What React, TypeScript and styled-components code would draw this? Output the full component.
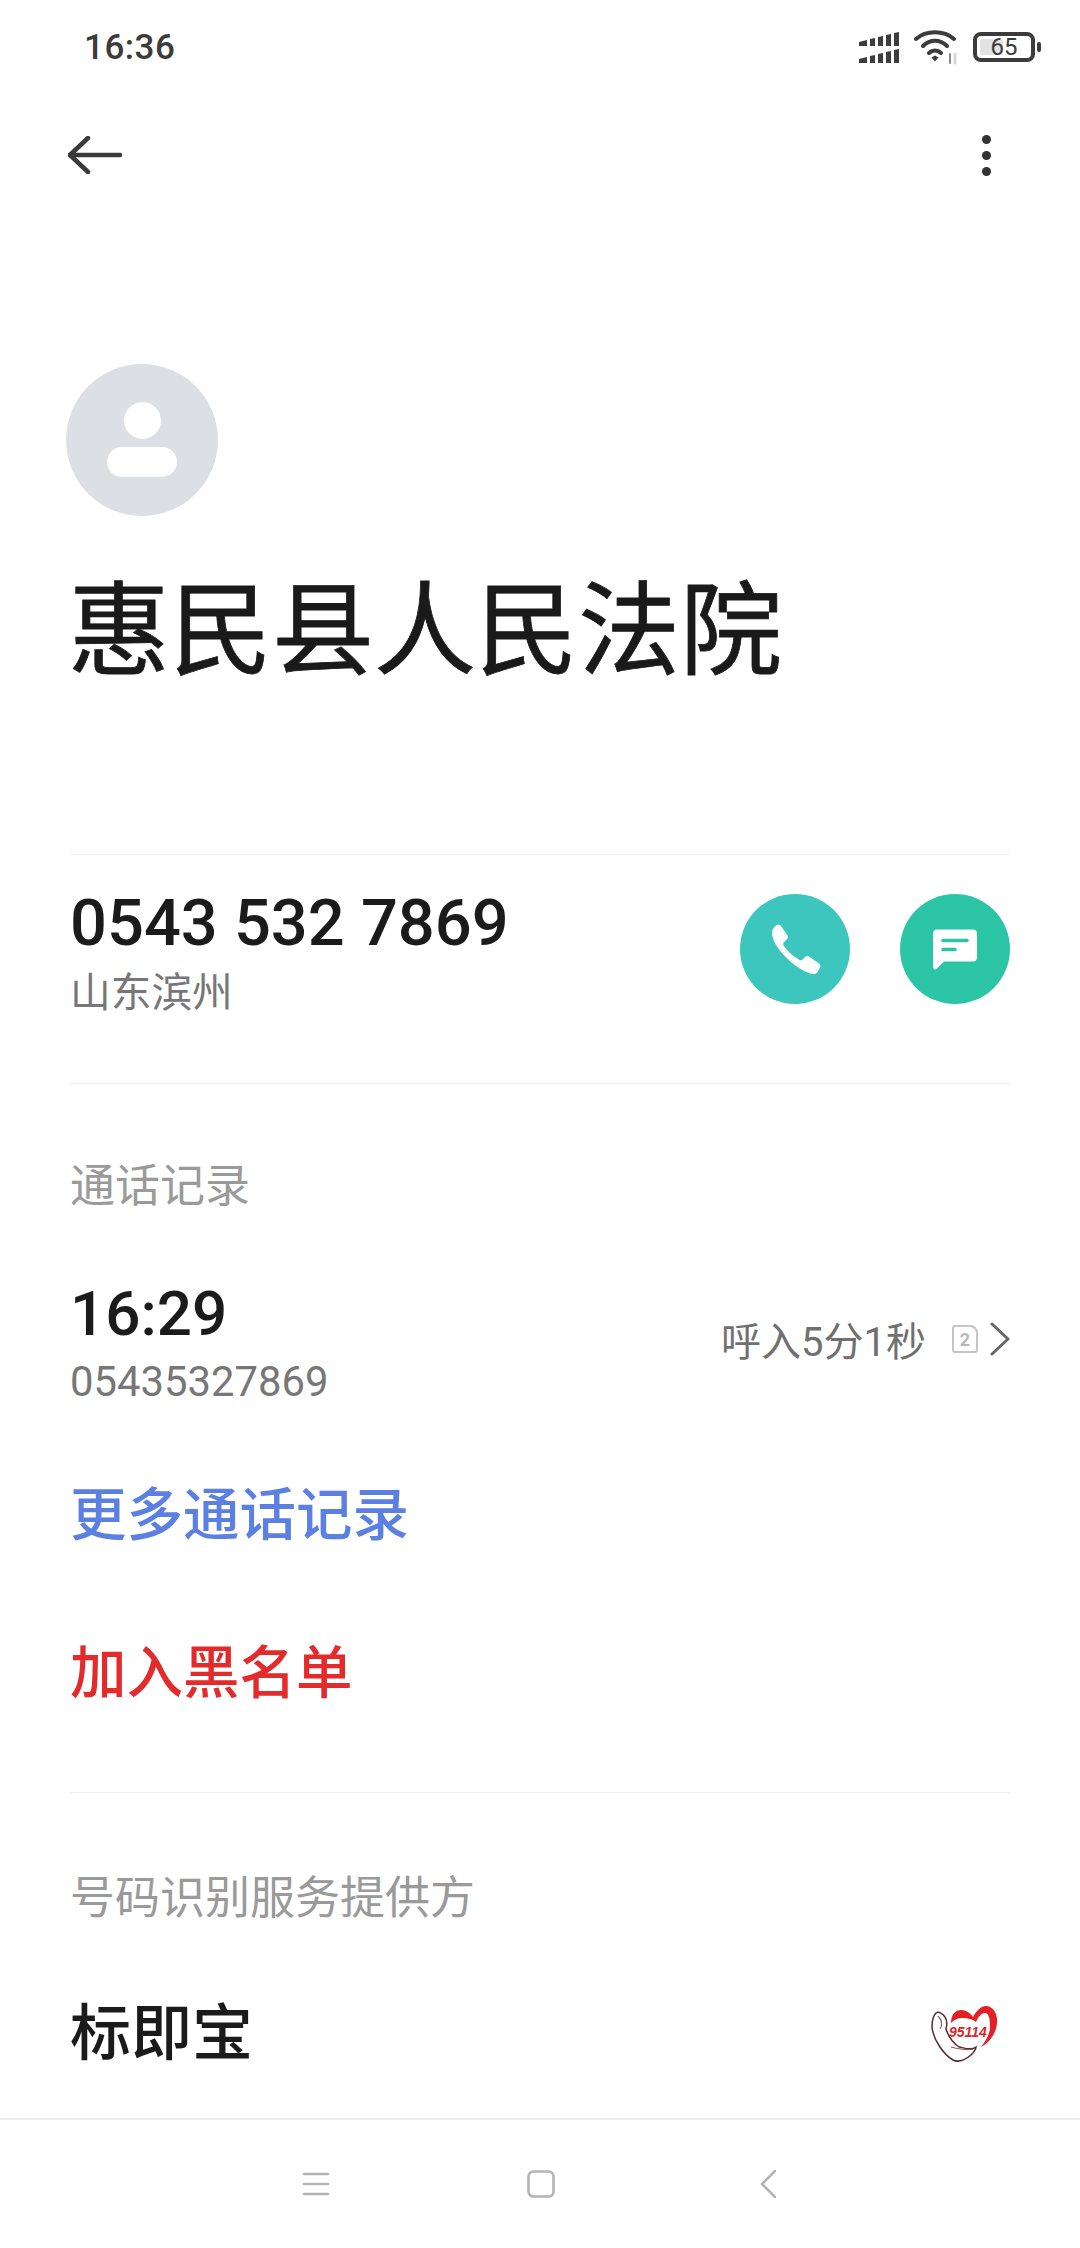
import React from "react";
import styled, { createGlobalStyle } from "styled-components";

const App = () => {
  return (
    <>
      <GlobalStyle />
      <Page>
        <StatusBar>
          <Clock>16:36</Clock>
          <StatusIcons>
            <svg width="42" height="32" viewBox="0 0 42 32" fill="#3c3c3c">
              <path d="M0 11l8-2v6H0zM11 8l5-1v8h-5zM19 6l5-1v10h-5zM27 4l5-1v12h-5zM35 2l5-1v14h-5z" />
              <path d="M0 28l8-2v6H0zM11 25l5-1v8h-5zM19 23l5-1v10h-5zM27 21l5-1v12h-5zM35 19l5-1v14h-5z" />
            </svg>
            <svg width="46" height="36" viewBox="0 0 46 36" fill="none" stroke="#3c3c3c" strokeWidth="4" strokeLinecap="round">
              <path d="M2 10C12 1 30 1 40 10" />
              <path d="M9 17C16 10 26 10 33 17" />
              <path d="M15 24C18.500 20.500 23.500 20.500 27 24" />
              <path d="M17.500 28.500L21 32.500L24.500 28.500L21 26.500Z" fill="#3c3c3c" stroke="none" />
              <path d="M36 25V34" stroke="#8a8a8a" strokeWidth="2" />
              <path d="M41 25V34" stroke="#d8d8d8" strokeWidth="3" />
            </svg>
            <Battery>
              <BatteryFill />
              <BatteryText>65</BatteryText>
              <BatteryTip />
            </Battery>
          </StatusIcons>
        </StatusBar>

        <TopBar>
          <svg width="54" height="38" viewBox="0 0 54 38" fill="none" stroke="#3a3a3a" strokeWidth="4.500" strokeLinecap="round" strokeLinejoin="round">
            <path d="M20 2L2 19L20 36" />
            <path d="M2 19H52" />
          </svg>
          <Dots>
            <Dot />
            <Dot />
            <Dot />
          </Dots>
        </TopBar>

        <Avatar>
          <AvatarHead />
          <AvatarBody />
        </Avatar>
        <Title>惠民县人民法院</Title>

        <Divider $top={162} />

        <NumberRow>
          <div>
            <PhoneNumber>0543 532 7869</PhoneNumber>
            <Region>山东滨州</Region>
          </div>
          <Actions>
            <RoundButton $bg="#3cc6bd">
              <svg width="52" height="52" viewBox="-2 0 52 52" fill="#fff">
                <path d="M5 2.500C6.500 1 8.500 1 9.700 2.500L16.500 12.500C17.200 13.800 17 15 16 16L12.800 19.500C12 20.500 12 21.500 12.600 22.500C16.500 28.500 22.500 33.500 28.500 37C29.500 37.600 30.500 37.400 31.300 36.700L34.500 33.500C35.500 32.600 36.700 32.600 37.800 33.300L48 40.500C49.500 41.600 49.800 43.200 49 44.500L46.500 49C45.500 50.800 43.500 51.500 41.500 51C35 49.500 27 45 20 39C12 32 5 24 2 15.500C0.500 11 0.800 7.500 2.500 5Z" />
              </svg>
            </RoundButton>
            <RoundButton $bg="#2bc5a6">
              <svg width="46" height="44" viewBox="0 -1.500 46 44" fill="#fff">
                <path d="M5 1h36c2.500 0 4 1.600 4 4v24c0 2.500-1.500 4-4 4H12l-7 7c-2 1.800-4 1-4-1.500V5c0-2.400 1.600-4 4-4z" />
                <path d="M11 12h24" stroke="#2bc5a6" strokeWidth="3.500" strokeLinecap="round" />
                <path d="M11 21h12" stroke="#2bc5a6" strokeWidth="3.500" strokeLinecap="round" />
              </svg>
            </RoundButton>
          </Actions>
        </NumberRow>

        <Divider $top={59} />

        <SectionLabel $top={75}>通话记录</SectionLabel>

        <RecordRow>
          <div>
            <RecordTime>16:29</RecordTime>
            <RecordNumber>05435327869</RecordNumber>
          </div>
          <RecordMeta>
            <RecordText>呼入5分1秒</RecordText>
            <SimBadge>2</SimBadge>
            <svg width="20" height="34" viewBox="0 0 20 34" fill="none" stroke="#666" strokeWidth="3" strokeLinecap="round" strokeLinejoin="round">
              <path d="M2 2L18 17L2 32" />
            </svg>
          </RecordMeta>
        </RecordRow>

        <LinkText $color="#5b80e2" $top={63}>更多通话记录</LinkText>
        <LinkText $color="#e32b2b" $top={80}>加入黑名单</LinkText>

        <Divider $top={79} />

        <SectionLabel $top={78}>号码识别服务提供方</SectionLabel>

        <ProviderRow>
          <ProviderName>标即宝</ProviderName>
          <svg width="70" height="58" viewBox="0 0 70 58" fill="none">
            <path d="M20 18C20 9 25 5 30 5C35 5 39 8 42 12C46 5 50 1 55 1C62 1 67 9 66 18C65 29 58 38 50 42C55 35 59 29 59 22C59 14 58 8 54 8C50 8 47 12 45 17C41 14 37 13 32 13C26 13 23 15 20 18Z" fill="#e41f26" />
            <path d="M5 8C2 11 1 16 1 22C2 34 12 49 22 55C28 58 34 55 40 50C43 47 45 44 45 42C40 46 34 43 28 42C22 38 17 30 15 24C16 20 17 16 14 12C12 9 8 6 5 8Z" stroke="#5b2a2a" strokeWidth="1.500" />
            <path d="M7 11C11 15 12 19 9 24" stroke="#8c5a5a" strokeWidth="1.100" />
            <path d="M20 42C28 44 36 46 42 44" stroke="#8c5a5a" strokeWidth="1.100" />
            <LogoNumber x="18" y="32">95114</LogoNumber>
          </svg>
        </ProviderRow>

        <NavBar>
          <svg width="28" height="24" viewBox="0 0 28 24" stroke="#b4b4b4" strokeWidth="2.600" strokeLinecap="round">
            <path d="M2 2H26" />
            <path d="M2 12H26" />
            <path d="M2 22H26" />
          </svg>
          <svg width="28" height="28" viewBox="0 0 28 28" fill="none" stroke="#b4b4b4" strokeWidth="2.600">
            <rect x="1.500" y="1.500" width="25" height="25" rx="5" />
          </svg>
          <NavBack width="16" height="28" viewBox="0 0 16 28" fill="none" stroke="#b4b4b4" strokeWidth="2.600" strokeLinecap="round" strokeLinejoin="round">
            <path d="M15 1L2 14L15 27" />
          </NavBack>
        </NavBar>
      </Page>
    </>
  );
};

export default App;

const GlobalStyle = createGlobalStyle`
  html, body {
    margin: 0;
    padding: 0;
    background: #fff;
  }
  body {
    font-family: "Roboto", "Noto Sans CJK SC", sans-serif;
  }
`;

const Page = styled.div`
  position: relative;
  width: 1080px;
  height: 2248px;
  overflow: hidden;
  background: #fff;
  padding: 0 70px;
  box-sizing: border-box;
`;

const StatusBar = styled.div`
  display: flex;
  justify-content: space-between;
  align-items: center;
  height: 94px;
  margin: 0 -33px 0 14px;
`;

const Clock = styled.div`
  font-size: 35px;
  font-weight: 500;
  color: #3c3c3c;
  letter-spacing: 0.5px;
`;

const StatusIcons = styled.div`
  display: flex;
  align-items: center;
  gap: 13px;
`;

const Battery = styled.div`
  position: relative;
  width: 54px;
  height: 22px;
  border: 4px solid #3c3c3c;
  border-radius: 8px;
  display: flex;
  align-items: center;
  justify-content: center;
  margin-right: 8px;
`;

const BatteryFill = styled.div`
  position: absolute;
  left: 3px;
  top: 3px;
  bottom: 3px;
  width: 23px;
  background: #e2e2e2;
  border-radius: 2px;
`;

const BatteryText = styled.span`
  position: relative;
  font-size: 24px;
  color: #3c3c3c;
  line-height: 1;
`;

const BatteryTip = styled.div`
  position: absolute;
  right: -10px;
  top: 6px;
  width: 4px;
  height: 10px;
  background: #3c3c3c;
  border-radius: 2px;
`;

const TopBar = styled.div`
  display: flex;
  justify-content: space-between;
  align-items: center;
  height: 122px;
  margin-left: -2px;
  margin-right: 19.500px;
`;

const Dots = styled.div`
  display: flex;
  flex-direction: column;
  gap: 7px;
`;

const Dot = styled.div`
  width: 9px;
  height: 9px;
  border-radius: 50%;
  background: #333;
`;

const Avatar = styled.div`
  display: flex;
  flex-direction: column;
  align-items: center;
  width: 152px;
  height: 152px;
  margin: 148px 0 0 -4px;
  border-radius: 50%;
  background: #dcdfe4;
`;

const AvatarHead = styled.div`
  width: 37px;
  height: 37px;
  margin-top: 38px;
  border-radius: 50%;
  background: #fff;
`;

const AvatarBody = styled.div`
  width: 70px;
  height: 30px;
  margin-top: 8px;
  border-radius: 15px;
  background: #fff;
`;

const Title = styled.h1`
  margin: 56px 0 0 -2px;
  font-size: 102px;
  font-weight: 400;
  -webkit-text-stroke: 0.8px #1a1a1a;
  line-height: 120px;
  color: #1a1a1a;
  white-space: nowrap;
`;

const Divider = styled.div<{ $top: number }>`
  height: 1px;
  margin-top: ${(p) => p.$top}px;
  background: #eeeeee;
`;

const NumberRow = styled.div`
  display: flex;
  justify-content: space-between;
  align-items: flex-start;
  margin-top: 32px;
`;

const PhoneNumber = styled.div`
  font-size: 65px;
  font-weight: 500;
  line-height: 72px;
  color: #1b1b1b;
  white-space: nowrap;
`;

const Region = styled.div`
  margin-top: 3px;
  font-size: 40.700px;
  line-height: 62px;
  color: #777;
`;

const Actions = styled.div`
  display: flex;
  gap: 50px;
  margin-top: 7px;
`;

const RoundButton = styled.div<{ $bg: string }>`
  display: flex;
  align-items: center;
  justify-content: center;
  width: 110px;
  height: 110px;
  border-radius: 50%;
  background: ${(p) => p.$bg};
`;

const SectionLabel = styled.div<{ $top: number }>`
  margin-top: ${(p) => p.$top}px;
  font-size: 45px;
  line-height: 56px;
  color: #9a9a9a;
  white-space: nowrap;
`;

const RecordRow = styled.div`
  display: flex;
  justify-content: space-between;
  align-items: center;
  margin-top: 63px;
`;

const RecordTime = styled.div`
  font-size: 62px;
  font-weight: 500;
  line-height: 72px;
  color: #1b1b1b;
`;

const RecordNumber = styled.div`
  font-size: 41.800px;
  line-height: 64px;
  color: #777;
`;

const RecordMeta = styled.div`
  display: flex;
  align-items: center;
  margin-bottom: 14px;
`;

const RecordText = styled.span`
  font-size: 40px;
  color: #707070;
`;

const SimBadge = styled.span`
  display: flex;
  align-items: center;
  justify-content: center;
  width: 26px;
  height: 28px;
  margin: 0 12px 0 26px;
  box-sizing: border-box;
  border: 2.500px solid #c4c4c4;
  border-radius: 3px 8px 3px 3px;
  font-size: 18px;
  font-weight: 700;
  color: #b8b8b8;
`;

const LinkText = styled.div<{ $color: string; $top: number }>`
  margin-top: ${(p) => p.$top}px;
  font-size: 56.500px;
  font-weight: 500;
  line-height: 78px;
  color: ${(p) => p.$color};
  white-space: nowrap;
`;

const ProviderRow = styled.div`
  display: flex;
  justify-content: space-between;
  align-items: center;
  margin-top: 65px;
  padding-right: 9px;
`;

const ProviderName = styled.div`
  font-size: 61px;
  font-weight: 500;
  line-height: 84px;
  color: #1b1b1b;
`;

const LogoNumber = styled.text`
  font-family: "Liberation Sans", sans-serif;
  font-size: 14px;
  font-weight: 700;
  font-style: italic;
  fill: #d6282d;
`;

const NavBar = styled.div`
  position: absolute;
  left: 0;
  right: 0;
  bottom: 0;
  height: 130px;
  display: flex;
  align-items: center;
  gap: 197px;
  padding-left: 302px;
  box-sizing: border-box;
  border-top: 2px solid #ececec;
  background: #fff;
`;

const NavBack = styled.svg`
  margin-left: 8px;
`;
